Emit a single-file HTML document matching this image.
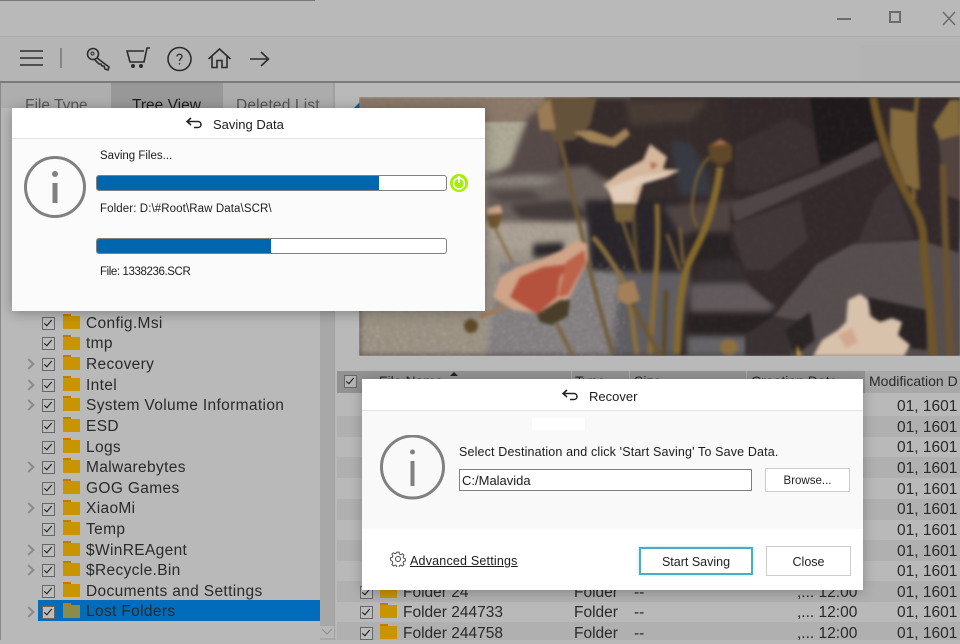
<!DOCTYPE html>
<html><head><meta charset="utf-8"><style>
html,body{margin:0;padding:0}
body{width:960px;height:640px;overflow:hidden;position:relative;background:#b9b9b9;font-family:"Liberation Sans",sans-serif;color:#2a2a2a}
div,span,svg{position:absolute}
.t{white-space:nowrap;font-size:15.5px;line-height:20px;margin-top:1px}
.tr .t{letter-spacing:.35px}
.s{white-space:nowrap;font-size:12px;line-height:16px;color:#1c1c1c;margin-top:1px}
.cb{width:13px;height:13px;box-sizing:border-box;border:1.5px solid #666;background:#bcbcbc;margin-top:1px}
.cb:after{content:"";position:absolute;left:3px;top:0;width:3px;height:7px;border:solid #111;border-width:0 1.6px 1.6px 0;transform:rotate(40deg)}
.f{width:17px;height:13px;background:#c89400;margin-top:-1px}
.f:before{content:"";position:absolute;left:0;top:-2px;width:8px;height:2px;background:#bf7c00}
.c{width:6px;height:6px;border:solid #8a8a8a;border-width:2px 2px 0 0;transform:rotate(45deg)}
.btn{background:#fff;border:1px solid #ccc;box-sizing:border-box;text-align:center;font-size:12.5px;color:#222}
.pb{border:1px solid #808080;border-radius:3px;background:#fff;box-sizing:border-box;overflow:hidden}
.pb div{left:0;top:0;bottom:0;background:#0066ae}
</style></head><body>
<div style="left:0;top:0;width:315px;height:1px;background:#777"></div>
<div style="left:0;top:36px;width:960px;height:1px;background:#acacac"></div>
<div style="left:0;top:37px;width:960px;height:44px;background:#b5b5b5"></div>
<div style="left:860px;top:45px;width:100px;height:36px;background:#b3b3b3"></div>
<div style="left:0;top:81px;width:960px;height:2px;background:#7b7b7b"></div>
<div style="left:0;top:83px;width:1px;height:557px;background:#8a8a8a"></div>

<svg style="left:0;top:0" width="960" height="82" fill="none" stroke="#2c2c2c" stroke-width="1.6">
<path d="M20 51h23M20 58h23M20 65h23"/>
<path d="M61 48v20" stroke="#555" stroke-width="1"/>
<circle cx="93" cy="54" r="5.5"/><circle cx="92.5" cy="53.5" r="1.5" stroke-width="1"/>
<path d="M97 58l12 9-1 3-3-1-1-3-2 0-1-2-2 0-4-4"/>
<path d="M150 48h-3l-3 14h-14l-3-11h17"/><circle cx="133" cy="66" r="1.2" fill="#2c2c2c"/><circle cx="141" cy="66" r="1.2" fill="#2c2c2c"/>
<circle cx="179.500" cy="59" r="11.500"/><path d="M177 56.500c0-3 5-3 5 0 0 2-2.500 2-2.500 4.500M179.500 63v1.500" stroke-width="1.300"/>
<path d="M208.500 59l11-10 11 10M212 56v11.500h5v-7h5v7h5V56"/>
<path d="M250 59h18M261 52l7.500 7-7.500 7"/>
<path d="M837 19h14" stroke="#6b6b6b" stroke-width="2"/>
<rect x="890" y="12" width="10" height="10" stroke="#6b6b6b" stroke-width="2"/>
<path d="M943 12l12 13M955 12l-12 13" stroke="#6b6b6b" stroke-width="1.500"/>
</svg>

<div style="left:1px;top:83px;width:110px;height:25px;background:#aeaeae"></div>
<div style="left:111px;top:83px;width:112px;height:25px;background:#989898"></div>
<div style="left:223px;top:83px;width:110px;height:25px;background:#acacac"></div>
<div class="t" style="left:25px;top:95px;color:#555">File Type</div>
<div class="t" style="left:132px;top:95px;color:#1c1c1c">Tree View</div>
<div class="t" style="left:236px;top:95px;color:#555;letter-spacing:.15px">Deleted List</div>
<div style="left:333px;top:83px;width:2px;height:557px;background:#a0a0a0"></div>
<svg style="left:354px;top:102px" width="6" height="6"><path d="M6 0v6H0z" fill="#0e5b9c"/></svg>

<div style="left:320px;top:311px;width:14px;height:329px;background:#a8a8a8"></div>
<div style="left:320px;top:626px;width:14px;height:12px;background:#b8b8b8"></div>
<svg style="left:320px;top:626px" width="14" height="12" fill="none"><path d="M2 3l5 5 5-5" stroke="#8e8e8e" stroke-width="1"/></svg>
<div style="left:38px;top:600px;width:282px;height:21px;background:#006cbb"></div>

<div class="c" style="left:25px;top:360px"></div>
<div class="c" style="left:25px;top:381px"></div>
<div class="c" style="left:25px;top:401px"></div>
<div class="c" style="left:25px;top:463px"></div>
<div class="c" style="left:25px;top:504px"></div>
<div class="c" style="left:25px;top:546px"></div>
<div class="c" style="left:25px;top:566px"></div>
<div class="c" style="left:25px;top:608px"></div>

<div class="tr" style="left:0;top:0">
<div class="cb" style="left:42px;top:316px"></div><div class="f" style="left:63px;top:317px"></div><div class="t" style="left:86px;top:313px">Config.Msi</div>
<div class="cb" style="left:42px;top:336px"></div><div class="f" style="left:63px;top:338px"></div><div class="t" style="left:86px;top:333px">tmp</div>
<div class="cb" style="left:42px;top:357px"></div><div class="f" style="left:63px;top:358px"></div><div class="t" style="left:86px;top:354px">Recovery</div>
<div class="cb" style="left:42px;top:378px"></div><div class="f" style="left:63px;top:379px"></div><div class="t" style="left:86px;top:375px">Intel</div>
<div class="cb" style="left:42px;top:398px"></div><div class="f" style="left:63px;top:399px"></div><div class="t" style="left:86px;top:395px">System Volume Information</div>
<div class="cb" style="left:42px;top:419px"></div><div class="f" style="left:63px;top:420px"></div><div class="t" style="left:86px;top:416px">ESD</div>
<div class="cb" style="left:42px;top:440px"></div><div class="f" style="left:63px;top:441px"></div><div class="t" style="left:86px;top:437px">Logs</div>
<div class="cb" style="left:42px;top:460px"></div><div class="f" style="left:63px;top:461px"></div><div class="t" style="left:86px;top:457px">Malwarebytes</div>
<div class="cb" style="left:42px;top:481px"></div><div class="f" style="left:63px;top:482px"></div><div class="t" style="left:86px;top:478px">GOG Games</div>
<div class="cb" style="left:42px;top:502px"></div><div class="f" style="left:63px;top:503px"></div><div class="t" style="left:86px;top:498px">XiaoMi</div>
<div class="cb" style="left:42px;top:522px"></div><div class="f" style="left:63px;top:523px"></div><div class="t" style="left:86px;top:519px">Temp</div>
<div class="cb" style="left:42px;top:543px"></div><div class="f" style="left:63px;top:544px"></div><div class="t" style="left:86px;top:540px">$WinREAgent</div>
<div class="cb" style="left:42px;top:563px"></div><div class="f" style="left:63px;top:564px"></div><div class="t" style="left:86px;top:560px">$Recycle.Bin</div>
<div class="cb" style="left:42px;top:584px"></div><div class="f" style="left:63px;top:585px"></div><div class="t" style="left:86px;top:581px">Documents and Settings</div>
<div class="cb" style="left:42px;top:605px"></div><div class="f" style="left:63px;top:606px;background:#8c8b4a"></div><div class="t" style="left:86px;top:601px">Lost Folders</div>
</div>

<svg style="left:359px;top:97px" width="601" height="259" viewBox="359 97 601 259">
<defs>
<filter id="a" x="0" y="0" width="1" height="1" color-interpolation-filters="sRGB"><feGaussianBlur stdDeviation="1"/></filter>
<filter id="b" x="-10%" y="-10%" width="120%" height="120%" color-interpolation-filters="sRGB"><feGaussianBlur stdDeviation="1.2"/></filter>
<filter id="b3" x="-10%" y="-10%" width="120%" height="120%" color-interpolation-filters="sRGB"><feGaussianBlur stdDeviation="3"/></filter>
<filter id="n" x="0" y="0" width="1" height="1"><feTurbulence type="fractalNoise" baseFrequency="0.22" numOctaves="2" seed="4"/><feColorMatrix values="0 0 0 0 0.08 0 0 0 0 0.08 0 0 0 0 0.08 0 0 0 1.6 -0.7"/></filter>
<filter id="w" x="0" y="0" width="1" height="1"><feTurbulence type="fractalNoise" baseFrequency="0.3 0.45" numOctaves="2" seed="9"/><feColorMatrix values="0 0 0 0 0.85 0 0 0 0 0.83 0 0 0 0 0.8 0 0 0 4 -2.2"/></filter>
<clipPath id="wc"><path d="M500 260H625V356H359V325H470z"/></clipPath>
</defs>
<g filter="url(#a)">
<rect x="359" y="97" width="601" height="259" fill="#322829"/>
<rect x="359" y="97" width="260" height="28" fill="#8c7a6a"/>
<rect x="585" y="97" width="45" height="22" fill="#7d7470"/>
<rect x="359" y="122" width="170" height="55" fill="#aeaa96"/>
<g filter="url(#b3)">
<path d="M359 175H610V260H620L640 356H359z" fill="#a0978a"/>
<path d="M486 172L600 165 620 230 590 225H486z" fill="#6a605c"/>
<path d="M486 176L520 172 560 180 540 186 486 186z" fill="#88817b"/>
<path d="M510 205L570 200 590 215 570 222 520 218z" fill="#433b39"/>
<path d="M490 192L530 190 545 200 500 202z" fill="#504643"/>
<path d="M486 222H590L600 250H486z" fill="#aca194"/>
<path d="M500 262H620L640 356H486z" fill="#847f80"/>
<path d="M359 318H486V356H359z" fill="#9c9284"/>
<path d="M510 165L528 118 545 105 562 135 560 172 486 178z" fill="#574a48"/>
<path d="M533 244L563 242 565 255 533 258z" fill="#2a2628"/>
<path d="M585 200H682V272H620L590 270z" fill="#282429"/>
<path d="M590 97H730V200L640 200 590 170 570 120z" fill="#352b2a"/>
<path d="M625 100H710L690 122 630 125z" fill="#483b35"/>
<path d="M670 140L690 142 708 175 712 195 680 195z" fill="#373a42"/>
<path d="M620 272H690L677 356H612z" fill="#605e63"/>
<path d="M663 206L740 200 745 232 680 235z" fill="#4f4442"/>
<path d="M690 284L745 282 775 305 770 312 690 312z" fill="#625a5c"/>
<path d="M687 312H775V338H690z" fill="#272122"/>
<path d="M687 336H780V356H687z" fill="#666468"/>
<path d="M707 254H745L760 283H695z" fill="#352e30"/>
<path d="M690 232H745V258L690 262z" fill="#282223"/>
</g>
<g filter="url(#b)">
<path d="M730 97H812L820 160 790 175 730 190z" fill="#322829"/>
<path d="M735 145L790 118 812 130 820 165 760 190 735 190z" fill="#3a3031"/>
<path d="M810 97H878L885 140 820 165z" fill="#1f191c"/>
<path d="M730 204L820 170 877 140 892 174 863 230 857 244 813 264 773 304 750 284 730 247z" fill="#33292b"/>
<path d="M730 204L820 170 877 140 882 156 815 186 735 222z" fill="#4f4546"/>
<path d="M730 225L800 200 808 240 770 270 745 270z" fill="#413738"/>
<path d="M857 244L877 197 893 180 915 222 915 238z" fill="#3f3537"/>
<path d="M885 135L960 97V240L915 238 893 180z" fill="#33292b"/>
<path d="M773 317L817 264 853 244 920 240 960 253V356H773z" fill="#574e4e"/>
<path d="M745 335L773 316 800 320 790 356H745z" fill="#393132"/>
<path d="M867 297L927 310 927 350 880 345z" fill="#292223"/>
<path d="M785 330L810 312 815 340 795 356z" fill="#2a2425"/>
<path d="M938 137L960 125V200L945 195z" fill="#52433f"/>
</g>
<rect x="359" y="97" width="601" height="259" filter="url(#n)" opacity=".2"/>
<rect x="359" y="250" width="290" height="106" filter="url(#w)" clip-path="url(#wc)" opacity=".22"/>
<g fill="none" stroke="#7a6136" filter="url(#b)">
<path d="M560 140C568 170 572 195 577 214S585 250 590 270 605 330 613 354" stroke-width="4" stroke="#6f5a36"/>
<path d="M720 167C718 185 714 200 710 214S700 240 693 254 686 270 683 284 678 320 677 354" stroke-width="7" stroke="#866a2e"/>
<path d="M710 157C702 163 696 174 693 197S694 215 697 227" stroke-width="2.500"/>
<path d="M657 204C658 225 658 240 657 257S652 320 650 354" stroke-width="5" stroke="#8a6c34"/>
<path d="M633 207C634 230 636 250 637 270" stroke-width="4" stroke="#5a4a30"/>
<path d="M593 237C605 250 615 268 623 280S632 325 637 354" stroke-width="5" stroke="#8a7040"/>
<path d="M620 214L640 274" stroke-width="3"/>
<path d="M680 227L683 264" stroke-width="3"/>
<path d="M667 234L680 270" stroke-width="3"/>
<path d="M630 300L660 356" stroke-width="4" stroke="#6d5530"/>
<path d="M666 290L664 356" stroke-width="5" stroke="#5c4a2c"/>
<path d="M873 97C880 135 892 170 910 200S922 240 925 265 932 330 933 356" stroke-width="8" stroke="#705628"/>
<path d="M917 97C914 130 912 160 914 200" stroke-width="4" stroke="#7c6234"/>
<path d="M943 164C944 220 948 290 950 356" stroke-width="7" stroke="#6a5230"/>
<path d="M495 228L513 264" stroke-width="2"/>
<path d="M480 317L510 304" stroke="#a27a55" stroke-width="4"/>
<path d="M557 324L573 356" stroke-width="3.500"/>
</g>
<g filter="url(#b)">
<path d="M545 97H597L590 125 575 140 555 142 545 125z" fill="#65523a"/>
<path d="M537 110L550 98 556 130 540 130z" fill="#9a7b55"/>
<path d="M573 132L590 130 612 138 626 128 630 135 615 147 590 142z" fill="#a08258"/>
<path d="M890 108L915 112 920 190 905 185 890 145z" fill="#846a3c"/>
<path d="M933 125L950 100 960 100V135L940 140z" fill="#846b3d"/>
<path d="M710 160L708 145 720 139 732 145 732 160 720 166z" fill="#5f4828"/>
<path d="M712 146L720 139 728 144z" fill="#a56a4c"/>
<path d="M604 185L620 172 643 160 650 144 667 157 663 169 680 170 667 177 643 184 637 204 613 204 608 190z" fill="#d5b79c"/>
<path d="M608 188L640 176 678 171 660 178 636 186 632 202 615 202z" fill="#e0ccb8"/>
<path d="M650 162l8 2-6 6z" fill="#b56a55"/>
<path d="M612 205L636 205 632 222 616 222z" fill="#77613a"/>
<path d="M500 277L517 267 540 260 562 250 577 240 587 244 588 260 570 297 540 314 513 310 493 297z" fill="#cfa488"/>
<path d="M510 297L520 277 543 267 570 264 560 277 557 297 537 314z" fill="#b5523e"/>
<path d="M566 262L584 250 586 262 568 295 558 297z" fill="#bd634c"/>
<path d="M537 314L560 300 570 300 568 316 552 325 540 322z" fill="#4a3e28"/>
<path d="M617 285L634 280 640 300 628 305 618 300z" fill="#a48058"/>
<path d="M487 215L503 213 498 228 490 228z" fill="#705530"/>
<path d="M487 208L500 205 503 213 487 215z" fill="#c8a48a"/>
<ellipse cx="471" cy="326" rx="7" ry="7" fill="#5f4a28"/>
<ellipse cx="729" cy="347" rx="9" ry="8" fill="#8c7040"/>
<path d="M813 356L822 340 838 330 846 322 848 300 860 294 868 300 870 316 880 322 892 318 902 322 898 335 910 345 904 356z" fill="#d8c2ac"/>
<path d="M838 335L852 328 858 342 846 348z" fill="#d3a890"/>
<path d="M797 345L802 356H796z" fill="#c49a3a"/>
</g>
</g>
</svg>

<div style="left:337px;top:371px;width:528px;height:22px;background:#929292"></div>
<div style="left:865px;top:371px;width:95px;height:22px;background:#a8a8a8"></div>
<div style="left:571px;top:371px;width:1px;height:22px;background:#aaa"></div>
<div style="left:629px;top:371px;width:1px;height:22px;background:#aaa"></div>
<div style="left:746px;top:371px;width:1px;height:22px;background:#aaa"></div>
<div class="cb" style="left:344px;top:374px;background:#b5b5b5"></div>
<div class="t" style="left:379px;top:370px;font-size:14px">File Name</div>
<div class="t" style="left:575px;top:370px;font-size:14px">Type</div>
<div class="t" style="left:634px;top:370px;font-size:14px">Size</div>
<div class="t" style="left:751px;top:370px;font-size:14px">Creation Date</div>
<div class="t" style="left:869px;top:370px;font-size:14px">Modification D</div>
<svg style="left:450px;top:371px" width="8" height="5"><path d="M0 5l4-4 4 4z" fill="#222"/></svg>

<div style="left:337px;top:416px;width:623px;height:21px;background:#b0b0b0"></div>
<div style="left:337px;top:457px;width:623px;height:21px;background:#b0b0b0"></div>
<div style="left:337px;top:499px;width:623px;height:21px;background:#b0b0b0"></div>
<div style="left:337px;top:540px;width:623px;height:21px;background:#b0b0b0"></div>
<div style="left:337px;top:581px;width:623px;height:21px;background:#b0b0b0"></div>
<div style="left:337px;top:622px;width:623px;height:18px;background:#b0b0b0"></div>

<div class="t" style="left:897px;top:396px">01, 1601</div>
<div class="t" style="left:897px;top:417px">01, 1601</div>
<div class="t" style="left:897px;top:437px">01, 1601</div>
<div class="t" style="left:897px;top:458px">01, 1601</div>
<div class="t" style="left:897px;top:479px">01, 1601</div>
<div class="t" style="left:897px;top:499px">01, 1601</div>
<div class="t" style="left:897px;top:520px">01, 1601</div>
<div class="t" style="left:897px;top:541px">01, 1601</div>
<div class="t" style="left:897px;top:561px">01, 1601</div>
<div class="t" style="left:897px;top:582px">01, 1601</div>
<div class="t" style="left:897px;top:602px">01, 1601</div>
<div class="t" style="left:897px;top:623px">01, 1601</div>

<div class="cb" style="left:360px;top:585px"></div><div class="f" style="left:380px;top:586px"></div><div class="t" style="left:403px;top:582px">Folder 24</div><div class="t" style="left:574px;top:582px">Folder</div><div class="t" style="left:634px;top:582px">--</div><div class="t" style="left:797px;top:582px">,... 12:00</div>
<div class="cb" style="left:360px;top:605px"></div><div class="f" style="left:380px;top:606px"></div><div class="t" style="left:403px;top:602px">Folder 244733</div><div class="t" style="left:574px;top:602px">Folder</div><div class="t" style="left:634px;top:602px">--</div><div class="t" style="left:797px;top:602px">,... 12:00</div>
<div class="cb" style="left:360px;top:626px"></div><div class="f" style="left:380px;top:627px"></div><div class="t" style="left:403px;top:623px">Folder 244758</div><div class="t" style="left:574px;top:623px">Folder</div><div class="t" style="left:634px;top:623px">--</div><div class="t" style="left:797px;top:623px">,... 12:00</div>

<!-- Saving dialog -->
<div style="left:12px;top:108px;width:473px;height:203px;background:#fbfbfb;box-shadow:0 2px 12px rgba(0,0,0,.3)">
<div style="left:0;top:0;width:473px;height:30px;background:#fff;border-bottom:1px solid #e2e2e2"></div>
</div>
<svg style="left:186px;top:117px" width="18" height="14" fill="none" stroke="#222" stroke-width="1.500"><path d="M5 1L1 4.500 5 8M1 4.500h11c4 0 4 6 0 6H8"/></svg>
<div class="s" style="left:213px;top:116px;font-size:13px">Saving Data</div>
<svg style="left:24px;top:156px" width="62" height="62" fill="none"><circle cx="31" cy="31" r="29.500" stroke="#808080" stroke-width="3"/><circle cx="31" cy="18" r="3" fill="#808080"/><rect x="28.500" y="27" width="5" height="20" fill="#808080"/></svg>
<div class="s" style="left:100px;top:147px;font-size:11.500px">Saving Files...</div>
<div class="pb" style="left:96px;top:175px;width:351px;height:16px"><div style="width:282px"></div></div>
<svg style="left:450px;top:174px" width="18" height="18"><circle cx="9" cy="9" r="9" fill="#a4f000"/><circle cx="9" cy="9.500" r="5.500" fill="none" stroke="#fff" stroke-width="1.500"/><path d="M9 2v7" stroke="#fff" stroke-width="2"/></svg>
<div class="s" style="left:100px;top:200px;font-size:11.500px;letter-spacing:.1px">Folder: D:\#Root\Raw Data\SCR\</div>
<div class="pb" style="left:96px;top:238px;width:351px;height:16px"><div style="width:174px"></div></div>
<div class="s" style="left:100px;top:263px;font-size:11.500px;letter-spacing:-.4px">File: 1338236.SCR</div>

<!-- Recover dialog -->
<div style="left:362px;top:379px;width:501px;height:211px;background:#fff;box-shadow:0 2px 12px rgba(0,0,0,.25)">
<div style="left:0;top:31px;width:501px;height:118px;background:#f9f9f9;border-top:1px solid #e4e4e4"></div>
<div style="left:170px;top:39px;width:53px;height:12px;background:#fff"></div>
</div>
<svg style="left:562px;top:389px" width="18" height="14" fill="none" stroke="#222" stroke-width="1.500"><path d="M5 1L1 4.500 5 8M1 4.500h11c4 0 4 6 0 6H8"/></svg>
<div class="s" style="left:589px;top:388px;font-size:13px">Recover</div>
<svg style="left:380px;top:435px" width="66" height="66" fill="none"><circle cx="32.500" cy="32" r="31" stroke="#808080" stroke-width="3"/><circle cx="32.500" cy="17" r="2.500" fill="#808080"/><rect x="30.500" y="26" width="4" height="25" fill="#808080"/></svg>
<div class="s" style="left:459px;top:443px;font-size:12.500px;letter-spacing:.15px">Select Destination and click 'Start Saving' To Save Data.</div>
<div style="left:459px;top:469px;width:293px;height:22px;background:#fff;border:1px solid #808080;box-sizing:border-box"></div>
<div class="s" style="left:462px;top:472px;font-size:13px">C:/Malavida</div>
<div class="btn" style="left:765px;top:468px;width:85px;height:24px;line-height:24px;font-size:11.500px">Browse...</div>
<svg style="left:390px;top:551px" width="16" height="16" fill="none" stroke="#444" stroke-width="1"><circle cx="8" cy="8" r="2.500"/><path d="M6.800 1h2.400l.4 2 1.500.7 1.800-1 1.600 1.700-1 1.700.6 1.500 1.900.5v2.400l-1.900.5-.6 1.500 1 1.700-1.600 1.700-1.800-1-1.500.7-.4 1.900H6.800l-.4-1.900-1.500-.7-1.800 1-1.600-1.700 1-1.700-.6-1.500L0 9.500V7.100l1.900-.5.6-1.500-1-1.700 1.600-1.700 1.800 1 1.500-.7z" transform="translate(.5 .2) scale(.93)"/></svg>
<div class="s" style="left:410px;top:552px;font-size:12.500px;letter-spacing:.2px;text-decoration:underline">Advanced Settings</div>
<div class="btn" style="left:639px;top:547px;width:114px;height:28px;border:2px solid #4bacc6;box-shadow:0 0 3px #a8e4ee;line-height:27px">Start Saving</div>
<div class="btn" style="left:766px;top:546px;width:85px;height:30px;line-height:31px">Close</div>
</body></html>
